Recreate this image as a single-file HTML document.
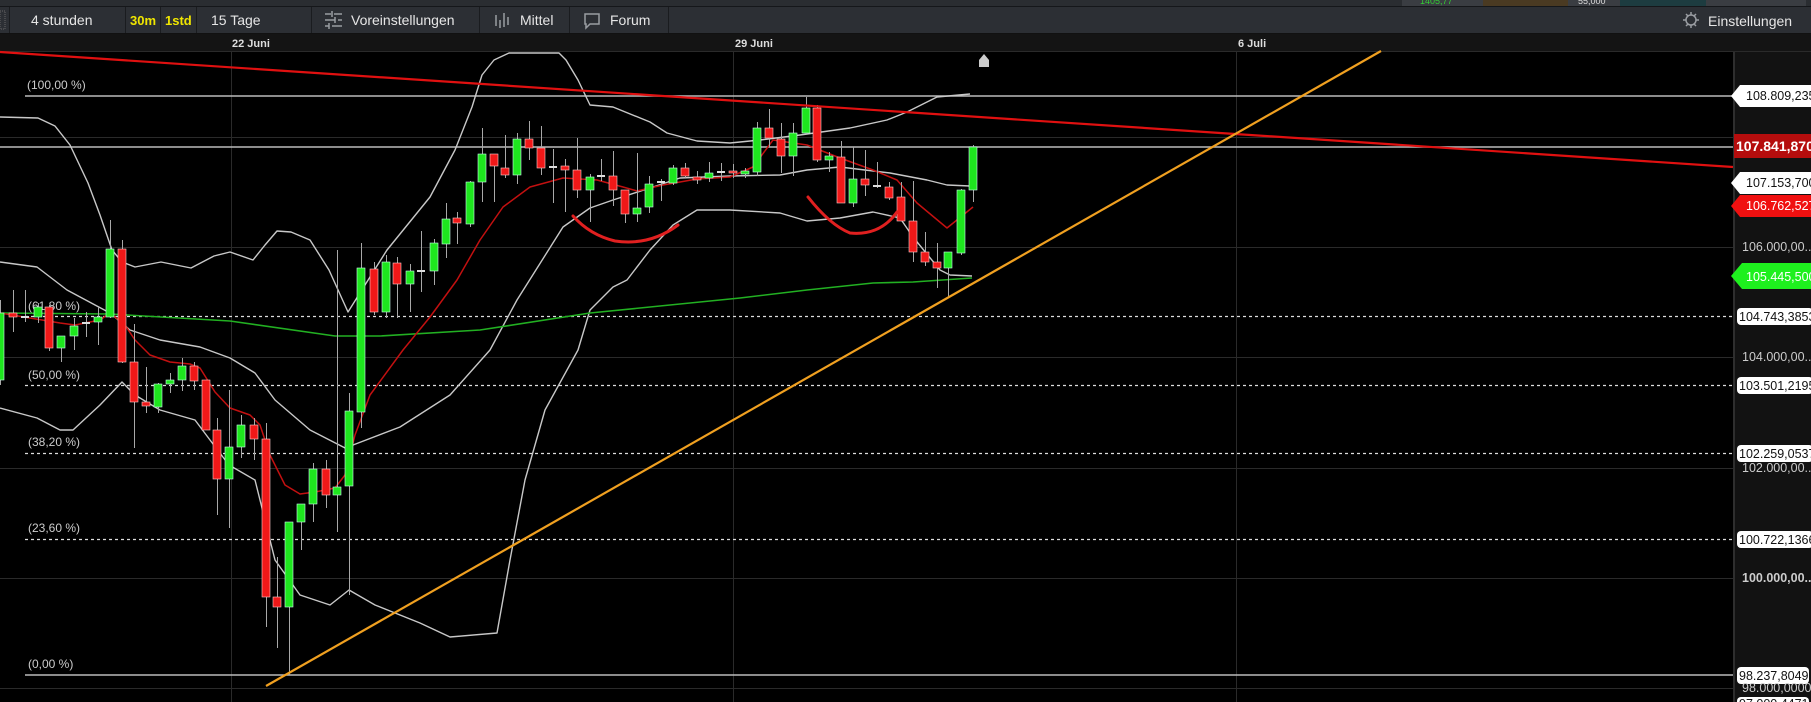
<!DOCTYPE html>
<html><head><meta charset="utf-8"><style>
html,body{margin:0;padding:0;background:#000;width:1811px;height:702px;overflow:hidden}
svg{display:block}
text{font-family:"Liberation Sans",sans-serif}
</style></head><body>
<svg width="1811" height="702" viewBox="0 0 1811 702" xmlns="http://www.w3.org/2000/svg">
<!-- top strip -->
<rect x="0" y="0" width="1811" height="7" fill="#2a2d31"/>
<rect x="1402" y="0" width="81" height="6" fill="#3a3d42"/>
<text x="1420" y="4" font-size="9" fill="#3c3">1405,77</text>
<rect x="1483" y="0" width="85" height="6" fill="#4a3a22"/>
<rect x="1568" y="0" width="52" height="6" fill="#3a3d42"/>
<text x="1578" y="4" font-size="9" fill="#ddd">55,000</text>
<rect x="1620" y="0" width="86" height="6" fill="#1d3c40"/>
<rect x="1706" y="0" width="100" height="6" fill="#3a3d42"/>
<rect x="0" y="6" width="1811" height="1" fill="#15171a"/>
<!-- toolbar -->
<rect x="0" y="7" width="1811" height="26" fill="#2c2f34"/>
<rect x="0" y="33" width="1811" height="1" fill="#111"/>
<g fill="#1a1c1f">
<rect x="9" y="7" width="1" height="26"/><rect x="125" y="7" width="1" height="26"/><rect x="160" y="7" width="1" height="26"/><rect x="196" y="7" width="1" height="26"/><rect x="311" y="7" width="1" height="26"/><rect x="479" y="7" width="1" height="26"/><rect x="569" y="7" width="1" height="26"/><rect x="668" y="7" width="1" height="26"/>
</g>
<rect x="0" y="11" width="5" height="18" fill="none" stroke="#666" stroke-dasharray="1,1"/>
<g font-size="14" fill="#e6e6e6">
<text x="31" y="25">4 stunden</text>
<text x="130" y="25" font-weight="bold" fill="#f0e600" font-size="13">30m</text>
<text x="165" y="25" font-weight="bold" fill="#f0e600" font-size="13">1std</text>
<text x="211" y="25">15 Tage</text>
<text x="351" y="25">Voreinstellungen</text>
<text x="520" y="25">Mittel</text>
<text x="610" y="25">Forum</text>
<text x="1708" y="26">Einstellungen</text>
</g>
<!-- icons -->
<g stroke="#9a9da2" stroke-width="1.5" fill="none">
<path d="M325 14h6M334 14h8M325 20h10M338 20h4M325 26h4M332 26h10M332 11v6M335 17v6M329 23v6"/>
<path d="M496 15v11M500 20v8M504 13v14M508 17v8"/>
<path d="M585 14h14v10h-9l-4 4v-4h-1z"/>
<circle cx="1691" cy="20" r="5"/>
<path d="M1691 12v3M1691 25v3M1683 20h3M1696 20h3M1686 14l2 2M1694 24l2 2M1686 26l2-2M1694 16l2-2"/>
</g>
<!-- date row -->
<rect x="0" y="34" width="1811" height="18" fill="#141414"/>
<rect x="0" y="51" width="1811" height="1" fill="#2a2a2a"/>
<g font-size="11" font-weight="bold" fill="#ddd">
<text x="232" y="47">22 Juni</text><text x="735" y="47">29 Juni</text><text x="1238" y="47">6 Juli</text>
</g>
<!-- chart bg -->
<rect x="0" y="52" width="1733" height="650" fill="#000"/>
<rect x="1733" y="52" width="78" height="650" fill="#121212"/>
<rect x="1733" y="52" width="2" height="650" fill="#2e2e2e"/>
<!-- grid -->
<g stroke="#2a2a2a" stroke-width="1">
<path d="M0 137.5H1733M0 247.5H1733M0 357.5H1733M0 468.5H1733M0 578.5H1733M0 688.5H1733M231.5 52V702M733.5 52V702M1236.5 52V702"/>
</g>
<!-- fib lines -->
<g stroke="#bbb" stroke-width="1.6">
<path d="M25 96H1733M0 147H1733M25 675H1733"/>
</g>
<g stroke="#ddd" stroke-width="1.3" stroke-dasharray="3,3">
<path d="M25 316.5H1733M25 385.5H1733M25 453.5H1733M25 539.5H1733"/>
</g>
<g font-size="12" fill="#ccc">
<text x="27" y="89">(100,00 %)</text>
<text x="28" y="310">(61,80 %)</text>
<text x="28" y="379">(50,00 %)</text>
<text x="28" y="446">(38,20 %)</text>
<text x="28" y="532">(23,60 %)</text>
<text x="28" y="668">(0,00 %)</text>
</g>
<!-- indicator lines -->
<g fill="none" stroke-linejoin="round">
<polyline stroke="#c8c8c8" stroke-width="1.4" points="0,117 38,118 55,126 70,145 88,183 100,215 112,250 122,262 135,267 161,262 191,268 214,256 230,252 253,260 265,245 277,231 291,232 310,240 329,270 348,312 387,250 430,197 455,150 472,107 482,75 494,60 509,53 559,53 566,60 578,80 590,105 613,107 650,122 667,133 697,141 730,143 760,140 800,135 850,128 887,120 907,112 937,97 970,94"/>
<polyline stroke="#c8c8c8" stroke-width="1.4" points="0,262 37,267 67,290 110,313 130,330 160,340 200,347 230,358 255,373 275,400 310,430 349,450 353,445 400,427 450,395 490,350 517,300 563,227 590,208 613,200 650,188 680,178 730,176 780,175 807,170 840,167 890,173 927,180 947,185 970,186"/>
<polyline stroke="#c8c8c8" stroke-width="1.4" points="0,408 37,418 60,430 73,430 100,405 122,382 135,395 160,410 195,420 210,440 229,465 255,480 275,560 300,595 330,605 349,590 375,605 420,623 450,637 497,633 510,560 525,480 545,410 578,350 590,310 613,287 627,280 650,250 673,225 697,210 730,210 780,213 807,221 840,218 873,212 900,218 913,237 940,270 950,275 972,276"/>
<polyline stroke="#22b022" stroke-width="1.6" points="0,313 110,314 230,321 335,336 380,336 480,330 590,313 740,298 807,290 873,283 913,282 972,278"/>
<polyline stroke="#c21010" stroke-width="1.5" points="0,313 30,318 60,323 75,325 100,320 110,313 125,325 135,340 150,355 170,362 190,364 200,368 215,392 230,408 250,415 260,425 270,455 285,485 300,494 315,492 335,488 345,475 355,435 370,395 403,350 430,317 457,280 480,240 503,207 530,187 563,178 597,180 623,187 637,191 663,185 697,179 730,177 753,167 773,140 807,145 840,158 873,170 897,180 917,203 947,228 973,207"/>
</g>
<!-- candles -->
<g stroke="#a8a8a8" stroke-width="1">
<path d="M0.5 300V385M13.5 290V332M25.5 290V322M38.5 303V323M49.5 305V351M61.5 336V362M74.5 318V350M86.5 312V337M98.5 307V345M110.5 220V318M122.5 240V363M134.5 324V448M146.5 367V413M158.5 383V413M170.5 373V393M182.5 358V391M194.5 362V390M206.5 380V430M217.5 418V515M229.5 390V528M241.5 415V458M254.5 418V460M266.5 423V627M277.5 557V648M289.5 522V675M301.5 504V550M313.5 463V522M326.5 460V508M337.5 250V532M349.5 393V595M361.5 243V428M374.5 262V315M386.5 255V318M397.5 257V318M410.5 264V312M421.5 231V292M434.5 239V285M446.5 203V258M457.5 212V244M470.5 181V227M482.5 128V202M494.5 154V202M505.5 135V178M517.5 133V184M529.5 121V160M541.5 126V175M553.5 149V203M565.5 159V212M577.5 138V198M590.5 174V222M601.5 159V181M613.5 151V206M625.5 190V223M637.5 153V222M649.5 176V213M661.5 179V201M673.5 165V185M685.5 163V178M697.5 171V184M709.5 162V182M721.5 163V181M733.5 164V178M745.5 168V178M757.5 122V176M769.5 109V147M781.5 123V173M793.5 123V176M806.5 97V133M817.5 105V162M829.5 152V172M841.5 141V203M853.5 147V207M865.5 150V196M877.5 162V188M889.5 182V200M901.5 182V221M913.5 181V262M925.5 232V266M937.5 243V288M948.5 252V298M961.5 189V255M973.5 145V202"/>
</g>
<g fill="#1ee61e" stroke="#cfe" stroke-width="0.6">
<rect x="-4" y="313" width="8" height="67"/><rect x="34" y="307" width="8" height="10"/><rect x="57" y="336" width="8" height="12"/><rect x="70" y="326" width="8" height="10"/><rect x="94" y="317" width="8" height="5"/><rect x="106" y="249" width="8" height="68"/><rect x="154" y="384" width="8" height="23"/><rect x="166" y="380" width="8" height="4"/><rect x="178" y="366" width="8" height="14"/><rect x="225" y="447" width="8" height="32"/><rect x="237" y="425" width="8" height="22"/><rect x="285" y="522" width="8" height="85"/><rect x="297" y="504" width="8" height="18"/><rect x="309" y="469" width="8" height="35"/><rect x="333" y="487" width="8" height="8"/><rect x="345" y="411" width="8" height="75"/><rect x="357" y="268" width="8" height="144"/><rect x="382" y="262" width="8" height="50"/><rect x="406" y="271" width="8" height="13"/><rect x="430" y="243" width="8" height="28"/><rect x="442" y="219" width="8" height="25"/><rect x="466" y="182" width="8" height="42"/><rect x="478" y="154" width="8" height="28"/><rect x="513" y="139" width="8" height="36"/><rect x="586" y="177" width="8" height="13"/><rect x="633" y="208" width="8" height="6"/><rect x="645" y="184" width="8" height="23"/><rect x="669" y="168" width="8" height="15"/><rect x="705" y="173" width="8" height="5"/><rect x="741" y="171" width="8" height="3"/><rect x="753" y="128" width="8" height="44"/><rect x="789" y="133" width="8" height="23"/><rect x="802" y="108" width="8" height="25"/><rect x="825" y="156" width="8" height="4"/><rect x="849" y="179" width="8" height="24"/><rect x="944" y="252" width="8" height="16"/><rect x="957" y="190" width="8" height="63"/><rect x="969" y="147" width="8" height="43"/>
</g>
<g fill="#f01818" stroke="#fcc" stroke-width="0.6">
<rect x="9" y="313" width="8" height="4"/><rect x="45" y="307" width="8" height="41"/><rect x="118" y="249" width="8" height="113"/><rect x="130" y="362" width="8" height="40"/><rect x="142" y="402" width="8" height="4"/><rect x="190" y="366" width="8" height="15"/><rect x="202" y="380" width="8" height="50"/><rect x="213" y="430" width="8" height="49"/><rect x="250" y="425" width="8" height="14"/><rect x="262" y="439" width="8" height="158"/><rect x="273" y="597" width="8" height="10"/><rect x="322" y="469" width="8" height="26"/><rect x="370" y="269" width="8" height="43"/><rect x="393" y="263" width="8" height="21"/><rect x="453" y="218" width="8" height="5"/><rect x="490" y="154" width="8" height="12"/><rect x="501" y="168" width="8" height="7"/><rect x="525" y="139" width="8" height="9"/><rect x="537" y="148" width="8" height="20"/><rect x="561" y="166" width="8" height="4"/><rect x="573" y="170" width="8" height="20"/><rect x="609" y="176" width="8" height="14"/><rect x="621" y="190" width="8" height="24"/><rect x="681" y="168" width="8" height="8"/><rect x="693" y="177" width="8" height="3"/><rect x="729" y="171" width="8" height="2"/><rect x="765" y="128" width="8" height="10"/><rect x="777" y="139" width="8" height="17"/><rect x="813" y="108" width="8" height="52"/><rect x="837" y="157" width="8" height="46"/><rect x="861" y="179" width="8" height="6"/><rect x="885" y="187" width="8" height="11"/><rect x="897" y="197" width="8" height="24"/><rect x="909" y="221" width="8" height="31"/><rect x="921" y="252" width="8" height="10"/><rect x="933" y="262" width="8" height="6"/>
</g>
<g fill="#ddd">
<rect x="21" y="316" width="8" height="2"/><rect x="82" y="322" width="8" height="2"/><rect x="417" y="270" width="8" height="2"/><rect x="549" y="166" width="8" height="2"/><rect x="597" y="175" width="8" height="2"/><rect x="657" y="181" width="8" height="2"/><rect x="717" y="171" width="8" height="2"/><rect x="873" y="185" width="8" height="2"/>
</g>
<!-- trend lines -->
<line x1="0" y1="52" x2="1733" y2="167" stroke="#e01010" stroke-width="2.2"/>
<line x1="266" y1="686" x2="1381" y2="51" stroke="#f0a020" stroke-width="2.2"/>
<!-- hand drawn -->
<g fill="none" stroke="#e02020" stroke-width="3" stroke-linecap="round">
<path d="M573 216Q590 235 615 241Q650 246 678 225"/>
<path d="M808 197Q830 225 850 233Q880 236 897 212"/>
</g>
<!-- marker -->
<path d="M979 67V60L984 54L989 60V67Z" fill="#ccc"/>
<!-- right axis labels -->
<g font-size="12.5">
<path d="M1731 96L1740 85H1811V107H1740Z" fill="#fff"/><text x="1746" y="100" fill="#111">108.809,235</text>
<rect x="1734" y="134" width="77" height="24" fill="#b50d0d"/><text x="1736" y="151" fill="#fff" font-weight="bold" font-size="14">107.841,870</text>
<path d="M1731 183L1740 172H1811V194H1740Z" fill="#fff"/><text x="1746" y="187" fill="#111">107.153,700</text>
<path d="M1731 206L1740 195H1811V217H1740Z" fill="#f01010"/><text x="1746" y="210" fill="#fff">106.762,527</text>
<text x="1742" y="251" fill="#ccc">106.000,00..</text>
<path d="M1731 276L1742 263H1811V289H1742Z" fill="#1ef01e"/><text x="1746" y="281" fill="#fff">105.445,500</text>
<rect x="1737" y="308" width="76" height="17" rx="4" fill="#fff"/><text x="1739" y="321" fill="#111">104.743,3853</text>
<text x="1742" y="361" fill="#ccc">104.000,00..</text>
<rect x="1737" y="377" width="76" height="17" rx="4" fill="#fff"/><text x="1739" y="390" fill="#111">103.501,2195</text>
<rect x="1737" y="445" width="76" height="17" rx="4" fill="#fff"/><text x="1739" y="458" fill="#111">102.259,0537</text>
<text x="1742" y="472" fill="#ccc">102.000,00..</text>
<rect x="1737" y="531" width="76" height="17" rx="4" fill="#fff"/><text x="1739" y="544" fill="#111">100.722,1366</text>
<text x="1742" y="582" fill="#ccc" font-weight="bold">100.000,00..</text>
<rect x="1737" y="667" width="72" height="17" rx="4" fill="#fff"/><text x="1739" y="680" fill="#111">98.237,8049</text>
<text x="1742" y="692" fill="#ccc">98.000,0000</text>
<rect x="1737" y="697" width="72" height="17" rx="4" fill="#fff"/><text x="1739" y="708" fill="#111">97.000,4471</text>
</g>
</svg>
</body></html>
